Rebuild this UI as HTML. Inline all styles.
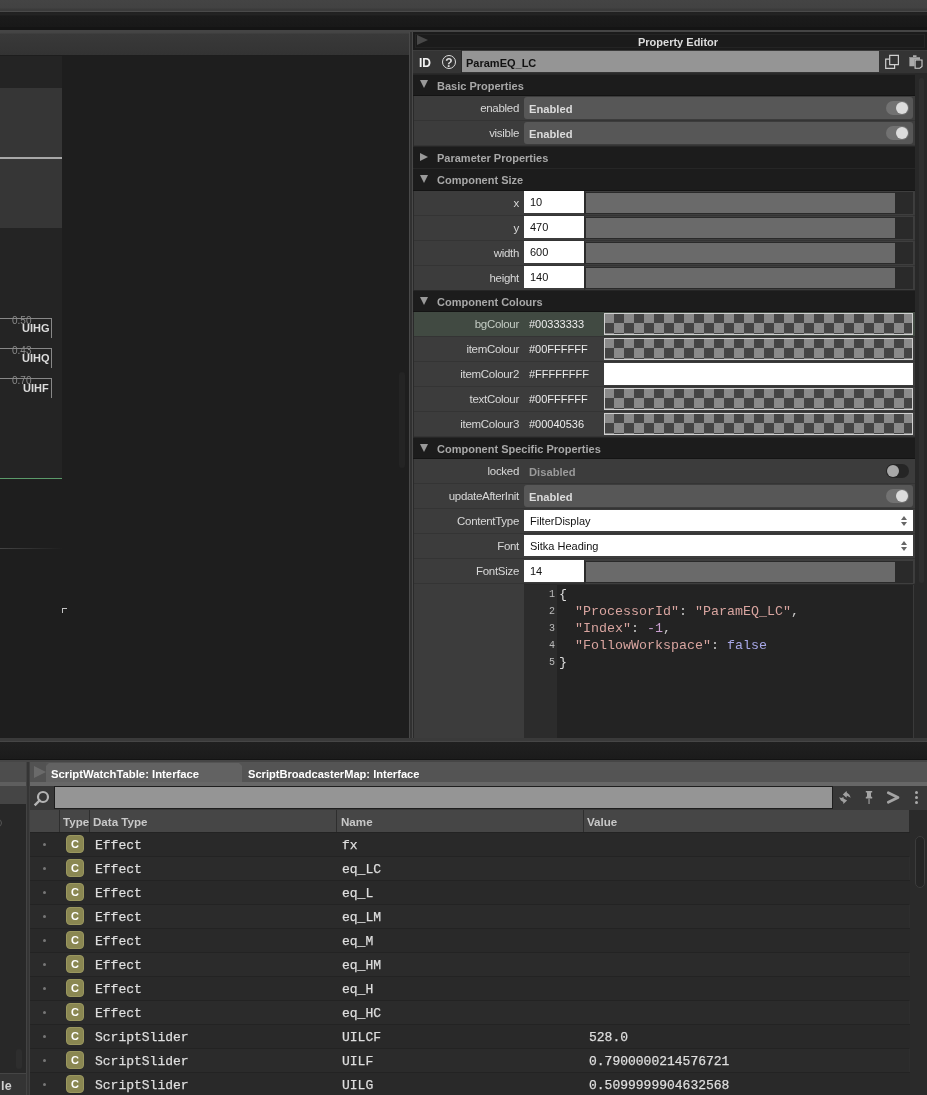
<!DOCTYPE html>
<html><head><meta charset="utf-8">
<style>
*{margin:0;padding:0;box-sizing:border-box}
html,body{width:927px;height:1095px;overflow:hidden;background:#1e1e1e;font-family:"Liberation Sans",sans-serif}
body{will-change:transform}
.a{position:absolute}
.sans{font-family:"Liberation Sans",sans-serif}
.mono{font-family:"Liberation Mono",monospace}
.hdr{position:absolute;left:413px;width:502px;background:#1c1c1c;border-top:1px solid #262626;border-bottom:1px solid #141414}
.hdr .t{position:absolute;left:24px;top:5px;font-size:11px;font-weight:bold;color:#a8a8a8;white-space:nowrap}
.tri-d{position:absolute;left:7px;top:6px;width:0;height:0;border-left:4px solid transparent;border-right:4px solid transparent;border-top:8px solid #9a9a9a}
.tri-r{position:absolute;left:7px;top:6px;width:0;height:0;border-top:4px solid transparent;border-bottom:4px solid transparent;border-left:8px solid #9a9a9a}
.row{position:absolute;left:414px;width:501px;height:25px;background:#3c3c3c;border-bottom:1px solid #343434}
.lbl{position:absolute;right:396px;top:6px;font-size:11.5px;letter-spacing:-0.3px;color:#d8d8d8;white-space:nowrap;text-align:right}
.vbox{position:absolute;left:110px;top:1px;width:389px;height:22px;background:#575757;border-radius:3px}
.vtxt{position:absolute;left:115px;top:7px;font-size:11.2px;font-weight:bold;color:#dcdcdc}
.tog{position:absolute;left:472px;top:5px;width:23px;height:14px;border-radius:7px;background:#727272}
.tog i{position:absolute;right:1px;top:1px;width:12px;height:12px;border-radius:6px;background:#dcdcdc}
.wbox{position:absolute;left:110px;top:0;width:60px;height:22px;background:#fff}
.wbox span{position:absolute;left:6px;top:5px;font-size:11px;color:#111}
.trk{position:absolute;left:170px;top:0;width:330px;height:24px;background:#2a2a2a;border:1px solid #3e3e3e;border-left:2px solid #2b2b2b}
.trk i{position:absolute;left:0;top:1px;width:309px;height:20px;background:#6a6a6a}
.chk{position:absolute;left:190px;top:1px;width:309px;height:22px;border:1px solid #d0d0d0;background:repeating-conic-gradient(#444 0 25%,#8a8a8a 0 50%) -1px -1px/20px 20px}
.hex{position:absolute;left:115px;top:6px;font-size:11px;color:#ececec}
.cb{position:absolute;left:110px;top:1px;width:389px;height:21px;background:#fff}
.cb span{position:absolute;left:6px;top:5px;font-size:11px;color:#111}
.cb b{position:absolute;right:6px;top:6px;width:0;height:0;border-left:3.5px solid transparent;border-right:3.5px solid transparent;border-bottom:4.5px solid #666}
.cb em{position:absolute;right:6px;top:12px;width:0;height:0;border-left:3.5px solid transparent;border-right:3.5px solid transparent;border-top:4.5px solid #666}
/* table */
.tr{position:absolute;left:30px;width:880px;height:24px;background:#292929;border-top:1px solid #232323}
.tr.o{background:#2b2b2b;border-right:1px solid #2e2e2e}
.tr .dot{position:absolute;left:13px;top:10px;width:3px;height:3px;border-radius:2px;background:#777}
.tr .badge{position:absolute;left:36px;top:2px;width:18px;height:18px;border-radius:4px;background:#8a8752;border:1px solid #9a975f}
.tr .badge span{position:absolute;left:0;top:2px;width:16px;text-align:center;font-size:11px;font-weight:bold;color:#fff}
.tr .c1{-webkit-text-stroke:0.25px #dedede;position:absolute;left:65px;top:5px;font-size:13px;color:#dedede;font-family:"Liberation Mono",monospace;white-space:pre}
.tr .c2{-webkit-text-stroke:0.25px #dedede;position:absolute;left:312px;top:5px;font-size:13px;color:#dedede;font-family:"Liberation Mono",monospace;white-space:pre}
.tr .c3{-webkit-text-stroke:0.25px #dedede;position:absolute;left:559px;top:5px;font-size:13px;color:#dedede;font-family:"Liberation Mono",monospace;white-space:pre}
</style></head>
<body>
<!-- top strip -->
<div class="a" style="left:0;top:0;width:927px;height:11px;background:linear-gradient(#444 0,#424242 8px,#3b3b3b 9px,#3b3b3b 11px)"></div>
<div class="a" style="left:0;top:11px;width:927px;height:1px;background:#4a4a4a"></div>
<div class="a" style="left:0;top:12px;width:927px;height:16px;background:linear-gradient(#202020 0,#232323 2.5px,#1b1b1b 4px,#181818 16px)"></div>
<div class="a" style="left:0;top:27px;width:927px;height:3px;background:#141414"></div>
<div class="a" style="left:0;top:30px;width:927px;height:2px;background:#454545"></div>

<!-- left top panel -->
<div class="a" style="left:0;top:32px;width:409px;height:23px;background:linear-gradient(#444 0,#444 1px,#393939 2px,#333 23px)"></div>
<div class="a" style="left:0;top:55px;width:409px;height:1px;background:#1d1d1d"></div>
<div class="a" style="left:0;top:56px;width:409px;height:682px;background:#1e1e1e"></div>
<div class="a" style="left:0;top:56px;width:62px;height:422px;background:#242424"></div>
<div class="a" style="left:0;top:88px;width:62px;height:140px;background:#363636"></div>
<div class="a" style="left:0;top:157px;width:62px;height:2px;background:#a8a8a8"></div>
<div class="a" style="left:0;top:478px;width:62px;height:1px;background:#5b9a6a"></div>
<div class="a" style="left:0;top:548px;width:62px;height:1px;background:linear-gradient(90deg,#444,#1f1f1f)"></div>
<div class="a" style="left:62px;top:608px;width:5px;height:5px;border-left:1px solid #c4c4c4;border-top:1px solid #c4c4c4"></div>
<div class="a" style="left:399px;top:372px;width:6px;height:96px;border-radius:3px;background:#242424"></div>
<!-- value boxes -->
<div class="a" style="left:-10px;top:318px;width:62px;height:20px;border-top:1px solid #888;border-right:1px solid #888"></div>
<div class="a sans" style="left:12px;top:315px;font-size:10px;color:#8a8a8a">0.50</div>
<div class="a sans" style="left:22px;top:322px;font-size:11px;font-weight:bold;color:#dcdcdc">UIHG</div>
<div class="a" style="left:-10px;top:348px;width:62px;height:20px;border-top:1px solid #888;border-right:1px solid #888"></div>
<div class="a sans" style="left:12px;top:345px;font-size:10px;color:#8a8a8a">0.43</div>
<div class="a sans" style="left:22px;top:352px;font-size:11px;font-weight:bold;color:#dcdcdc">UIHQ</div>
<div class="a" style="left:-10px;top:378px;width:62px;height:20px;border-top:1px solid #888;border-right:1px solid #888"></div>
<div class="a sans" style="left:12px;top:375px;font-size:10px;color:#8a8a8a">0.70</div>
<div class="a sans" style="left:23px;top:382px;font-size:11px;font-weight:bold;color:#dcdcdc">UIHF</div>

<!-- vertical separator -->
<div class="a" style="left:409px;top:32px;width:1px;height:706px;background:#494949"></div>
<div class="a" style="left:410px;top:32px;width:2px;height:706px;background:#313131"></div>
<div class="a" style="left:412px;top:32px;width:1px;height:706px;background:#494949"></div>

<!-- right panel -->
<div class="a" style="left:413px;top:32px;width:514px;height:706px;background:#2a2a2a"></div>
<div class="a" style="left:413px;top:32px;width:514px;height:18px;background:#1b1b1b"></div>
<div class="a" style="left:415px;top:34px;width:510px;height:14px;border:1px solid #242424"></div>
<div class="a" style="left:417px;top:35px;width:0;height:0;border-top:5.5px solid transparent;border-bottom:5.5px solid transparent;border-left:11px solid #484848"></div>
<div class="a sans" style="left:638px;top:36px;font-size:11px;font-weight:bold;color:#dcdcdc">Property Editor</div>
<!-- ID row -->
<div class="a" style="left:413px;top:50px;width:514px;height:23px;background:#343434;border-top:1px solid #3c3c3c"></div>
<div class="a sans" style="left:419px;top:56px;font-size:12px;font-weight:bold;color:#f4f4f4">ID</div>
<div class="a" style="left:442px;top:55px;width:14px;height:14px;border:1.5px solid #ddd;border-radius:50%"></div>
<div class="a sans" style="left:444px;top:56px;width:10px;text-align:center;font-size:12px;font-weight:bold;color:#ddd">?</div>
<div class="a" style="left:461px;top:50px;width:1px;height:23px;background:#2a2a2a"></div><div class="a" style="left:462px;top:51px;width:417px;height:21px;background:#959595"></div>
<div class="a sans" style="left:466px;top:57px;font-size:11px;font-weight:bold;color:#111">ParamEQ_LC</div>
<svg class="a" style="left:880px;top:50px" width="47" height="23" viewBox="880 50 47 23"><path d="M889.7 55.4 H898.4 V64.6 H889.7 Z" fill="none" stroke="#cfcfcf" stroke-width="1.2"/><path d="M889.7 59.2 H885.7 V68.4 H894.6 V64.6" fill="none" stroke="#cfcfcf" stroke-width="1.2"/>
<path d="M909.4 57.1 H913 V55.2 H916.5 V57.1 H920 V59.4 H914.5 V66.2 H909.4 Z" fill="#ababab"/><path d="M909.4 57.1 H920 V58 H909.4 Z" fill="#8a8a8a"/><path d="M915.1 60 H922 V66.5 L919.8 68.2 H915.1 Z" fill="#333" stroke="#cfcfcf" stroke-width="1.1"/></svg>

<!-- scrollbar -->
<div class="a" style="left:915px;top:73px;width:12px;height:665px;background:#282828"></div>
<div class="a" style="left:919px;top:78px;width:5px;height:505px;border-radius:3px;background:#2f2f2f"></div>

<!-- Basic Properties -->
<div class="hdr" style="top:74px;height:22px"><div class="tri-d" style="top:5px"></div><div class="t">Basic Properties</div></div>
<div class="row" style="top:96px"><div class="lbl">enabled</div><div class="vbox"></div><div class="vtxt">Enabled</div><div class="tog"><i></i></div></div>
<div class="row" style="top:121px"><div class="lbl">visible</div><div class="vbox"></div><div class="vtxt">Enabled</div><div class="tog"><i></i></div></div>
<div class="hdr" style="top:146px;height:23px"><div class="tri-r"></div><div class="t">Parameter Properties</div></div>
<div class="hdr" style="top:168px;height:23px"><div class="tri-d"></div><div class="t">Component Size</div></div>
<div class="row" style="top:191px"><div class="lbl">x</div><div class="wbox"><span>10</span></div><div class="trk"><i></i></div></div>
<div class="row" style="top:216px"><div class="lbl">y</div><div class="wbox"><span>470</span></div><div class="trk"><i></i></div></div>
<div class="row" style="top:241px"><div class="lbl">width</div><div class="wbox"><span>600</span></div><div class="trk"><i></i></div></div>
<div class="row" style="top:266px"><div class="lbl">height</div><div class="wbox"><span>140</span></div><div class="trk"><i></i></div></div>
<div class="hdr" style="top:290px;height:22px"><div class="tri-d"></div><div class="t">Component Colours</div></div>
<div class="row" style="top:312px;background:#414a42"><div class="lbl" style="color:#c4ccc4">bgColour</div><div class="hex">#00333333</div><div class="chk"></div></div>
<div class="row" style="top:337px"><div class="lbl">itemColour</div><div class="hex">#00FFFFFF</div><div class="chk"></div></div>
<div class="row" style="top:362px"><div class="lbl">itemColour2</div><div class="hex">#FFFFFFFF</div><div class="chk" style="background:#fff;border-color:#fff"></div></div>
<div class="row" style="top:387px"><div class="lbl">textColour</div><div class="hex">#00FFFFFF</div><div class="chk"></div></div>
<div class="row" style="top:412px"><div class="lbl">itemColour3</div><div class="hex">#00040536</div><div class="chk"></div></div>
<div class="hdr" style="top:437px;height:22px"><div class="tri-d"></div><div class="t">Component Specific Properties</div></div>
<div class="row" style="top:459px"><div class="lbl">locked</div><div class="vtxt" style="color:#9a9a9a">Disabled</div><div class="tog" style="background:#252525"><i style="left:1px;right:auto;background:#a8a8a8"></i></div></div>
<div class="row" style="top:484px"><div class="lbl">updateAfterInit</div><div class="vbox"></div><div class="vtxt">Enabled</div><div class="tog"><i></i></div></div>
<div class="row" style="top:509px"><div class="lbl">ContentType</div><div class="cb"><span>FilterDisplay</span><b></b><em></em></div></div>
<div class="row" style="top:534px"><div class="lbl">Font</div><div class="cb"><span>Sitka Heading</span><b></b><em></em></div></div>
<div class="row" style="top:559px"><div class="lbl">FontSize</div><div class="wbox" style="top:1px"><span>14</span></div><div class="trk" style="top:1px"><i></i></div></div>
<!-- code editor -->
<div class="a" style="left:414px;top:584px;width:110px;height:154px;background:#3c3c3c"></div>
<div class="a" style="left:524px;top:585px;width:33px;height:153px;background:#2c2c2c"></div>
<div class="a" style="left:557px;top:585px;width:356px;height:153px;background:#232323"></div>
<div class="a" style="left:913px;top:585px;width:1px;height:153px;background:#3a3a3a"></div>
<div class="a" style="left:914px;top:585px;width:1px;height:153px;background:#282828"></div>
<div class="a mono" style="left:540px;top:586px;width:15px;text-align:right;font-size:10px;line-height:17px;color:#bbb;white-space:pre">1
2
3
4
5</div>
<div class="a mono" style="left:559px;top:586px;font-size:13.33px;line-height:17px;color:#d9a5a0;white-space:pre"><span style="color:#ddd">{</span>
  "ProcessorId"<span style="color:#ccc">:</span> "ParamEQ_LC"<span style="color:#ccc">,</span>
  "Index"<span style="color:#ccc">:</span> <span style="color:#c9a0d0">-1</span><span style="color:#ccc">,</span>
  "FollowWorkspace"<span style="color:#ccc">:</span> <span style="color:#a8a8e8">false</span>
<span style="color:#ddd">}</span></div>

<!-- middle band -->
<div class="a" style="left:0;top:738px;width:927px;height:3px;background:#3a3a3a"></div>
<div class="a" style="left:0;top:741px;width:927px;height:1px;background:#464646"></div>
<div class="a" style="left:0;top:742px;width:927px;height:17px;background:linear-gradient(#202020,#1b1b1b)"></div>
<div class="a" style="left:0;top:759px;width:927px;height:1px;background:#131313"></div>

<!-- bottom left panel -->
<div class="a" style="left:0;top:760px;width:26px;height:335px;background:#282828"></div>
<div class="a" style="left:0;top:760px;width:26px;height:2px;background:#454545"></div>
<div class="a" style="left:0;top:762px;width:26px;height:20px;background:#4d4d4d"></div>
<div class="a" style="left:0;top:782px;width:26px;height:4px;background:#5e5e5e"></div>
<div class="a" style="left:0;top:786px;width:26px;height:18px;background:#454545"></div>
<div class="a" style="left:-6px;top:819px;width:8px;height:8px;border:1px solid #555;border-radius:50%"></div>
<div class="a" style="left:16px;top:1049px;width:6px;height:20px;border-radius:3px;background:#2e2e2e"></div>
<div class="a" style="left:0;top:1073px;width:26px;height:22px;background:#343434;border-top:1px solid #454545"></div>
<div class="a sans" style="left:1px;top:1079px;font-size:12.5px;font-weight:bold;color:#d0d0d0;letter-spacing:0.3px">le</div>
<!-- separator -->
<div class="a" style="left:26px;top:760px;width:1px;height:335px;background:#434343"></div>
<div class="a" style="left:27px;top:760px;width:2px;height:335px;background:#353535"></div>
<div class="a" style="left:29px;top:760px;width:1px;height:335px;background:#404040"></div>
<div class="a" style="left:0;top:760px;width:30px;height:2px;background:#464646"></div>

<!-- bottom right panel -->
<div class="a" style="left:30px;top:760px;width:897px;height:335px;background:#2a2a2a"></div>
<div class="a" style="left:30px;top:760px;width:897px;height:2px;background:#464646"></div>
<div class="a" style="left:30px;top:762px;width:897px;height:20px;background:#545454"></div>
<div class="a" style="left:30px;top:762px;width:16px;height:20px;background:#525252"></div>
<div class="a" style="left:34px;top:766px;width:0;height:0;border-top:6px solid transparent;border-bottom:6px solid transparent;border-left:12px solid #6a6a6a"></div>
<div class="a" style="left:46px;top:763px;width:196px;height:19px;background:#626262;clip-path:polygon(3px 0,193px 0,196px 3px,196px 19px,0 19px,0 3px)"></div>
<div class="a sans" style="left:51px;top:768px;font-size:11.3px;font-weight:bold;color:#fff">ScriptWatchTable: Interface</div>
<div class="a sans" style="left:248px;top:768px;font-size:11.1px;font-weight:bold;color:#fff">ScriptBroadcasterMap: Interface</div>
<div class="a" style="left:30px;top:782px;width:897px;height:4px;background:#676767"></div>
<!-- search row -->
<div class="a" style="left:30px;top:786px;width:897px;height:24px;background:#383838"></div>
<svg class="a" style="left:33px;top:789px" width="18" height="19" viewBox="0 0 18 19"><circle cx="10" cy="8" r="5" fill="none" stroke="#b4b4b4" stroke-width="2.2"/><path d="M6.6 11.4 L2.5 15.5" stroke="#b4b4b4" stroke-width="2.4" stroke-linecap="square"/></svg>
<div class="a" style="left:54px;top:786px;width:779px;height:23px;background:#959595;border:1px solid #1e1e1e"></div>
<svg class="a" style="left:834px;top:786px" width="20" height="24" viewBox="834 786 20 24"><path d="M842.8 794.4 L846.5 790.9 L846.9 792.7 L849.2 794.6 L850.8 797.7 L848.4 796.5 L846.9 795.8 L846.5 797.7 Z" fill="#a0a0a0"/><path d="M839.1 797.3 L841.4 798.1 L843.4 797.1 L843.6 798.5 L847.1 800.4 L843.4 803.9 L843.2 802 L840.9 800.4 Z" fill="#a0a0a0"/></svg>
<svg class="a" style="left:864px;top:790px" width="10" height="15" viewBox="0 0 10 15"><path d="M1.8 1 H8.2 V2.5 H7 V6.5 L8.2 7 V8.4 H1.8 V7 L3 6.5 V2.5 H1.8 Z" fill="#a4a4a4"/><path d="M4.3 8.4 H5.8 V14 H4.3 Z" fill="#888"/></svg>
<svg class="a" style="left:884px;top:789px" width="18" height="17" viewBox="0 0 18 17"><path d="M4.3 3.8 L14 8.5 L4.3 13.2" fill="none" stroke="#a4a4a4" stroke-width="2.8" stroke-linecap="round" stroke-linejoin="round"/></svg>
<div class="a" style="left:915px;top:791px;width:3px;height:3px;border-radius:2px;background:#aaa"></div>
<div class="a" style="left:915px;top:796px;width:3px;height:3px;border-radius:2px;background:#aaa"></div>
<div class="a" style="left:915px;top:801px;width:3px;height:3px;border-radius:2px;background:#aaa"></div>
<!-- header row -->

<div class="a" style="left:30px;top:810px;width:879px;height:22px;background:#464646"></div>
<div class="a" style="left:59px;top:810px;width:1px;height:22px;background:#2e2e2e"></div>
<div class="a" style="left:89px;top:810px;width:1px;height:22px;background:#2e2e2e"></div>
<div class="a" style="left:336px;top:810px;width:1px;height:22px;background:#2e2e2e"></div>
<div class="a" style="left:583px;top:810px;width:1px;height:22px;background:#2e2e2e"></div>
<div class="a sans" style="left:63px;top:815px;font-size:11.6px;font-weight:bold;color:#c8c8c8">Type</div>
<div class="a sans" style="left:93px;top:815px;font-size:11.6px;font-weight:bold;color:#c8c8c8">Data Type</div>
<div class="a sans" style="left:341px;top:815px;font-size:11.6px;font-weight:bold;color:#c8c8c8">Name</div>
<div class="a sans" style="left:587px;top:815px;font-size:11.6px;font-weight:bold;color:#c8c8c8">Value</div>
<div class="a" style="left:909px;top:810px;width:18px;height:285px;background:#2a2a2a"></div>
<div class="a" style="left:915px;top:836px;width:10px;height:52px;border-radius:5px;border:1px solid #3c3c3c;background:#252525"></div>
<!-- rows -->
<div class="tr" style="top:832px"><div class="dot"></div><div class="badge"><span>C</span></div><div class="c1">Effect</div><div class="c2">fx</div></div>
<div class="tr o" style="top:856px"><div class="dot"></div><div class="badge"><span>C</span></div><div class="c1">Effect</div><div class="c2">eq_LC</div></div>
<div class="tr" style="top:880px"><div class="dot"></div><div class="badge"><span>C</span></div><div class="c1">Effect</div><div class="c2">eq_L</div></div>
<div class="tr o" style="top:904px"><div class="dot"></div><div class="badge"><span>C</span></div><div class="c1">Effect</div><div class="c2">eq_LM</div></div>
<div class="tr" style="top:928px"><div class="dot"></div><div class="badge"><span>C</span></div><div class="c1">Effect</div><div class="c2">eq_M</div></div>
<div class="tr o" style="top:952px"><div class="dot"></div><div class="badge"><span>C</span></div><div class="c1">Effect</div><div class="c2">eq_HM</div></div>
<div class="tr" style="top:976px"><div class="dot"></div><div class="badge"><span>C</span></div><div class="c1">Effect</div><div class="c2">eq_H</div></div>
<div class="tr o" style="top:1000px"><div class="dot"></div><div class="badge"><span>C</span></div><div class="c1">Effect</div><div class="c2">eq_HC</div></div>
<div class="tr" style="top:1024px"><div class="dot"></div><div class="badge"><span>C</span></div><div class="c1">ScriptSlider</div><div class="c2">UILCF</div><div class="c3">528.0</div></div>
<div class="tr o" style="top:1048px"><div class="dot"></div><div class="badge"><span>C</span></div><div class="c1">ScriptSlider</div><div class="c2">UILF</div><div class="c3">0.7900000214576721</div></div>
<div class="tr" style="top:1072px"><div class="dot"></div><div class="badge"><span>C</span></div><div class="c1">ScriptSlider</div><div class="c2">UILG</div><div class="c3">0.5099999904632568</div></div>
</body></html>
